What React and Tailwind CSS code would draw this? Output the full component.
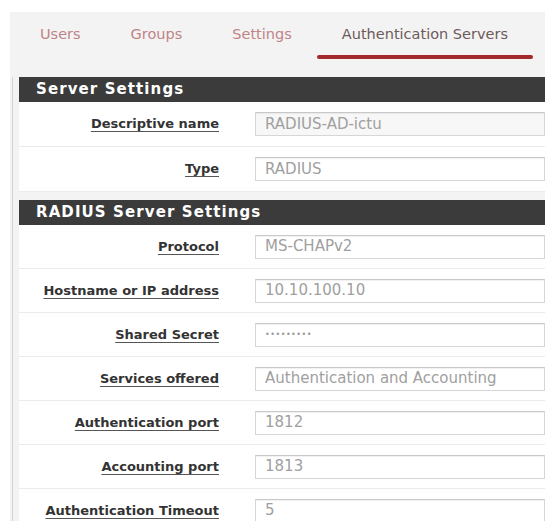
import React from 'react';

const tabs = [
  { label: 'Users' },
  { label: 'Groups' },
  { label: 'Settings' },
  { label: 'Authentication Servers', active: true },
];

const serverRows = [
  { label: 'Descriptive name', value: 'RADIUS-AD-ictu', muted: true },
  { label: 'Type', value: 'RADIUS' },
];

const radiusRows = [
  { label: 'Protocol', value: 'MS-CHAPv2' },
  { label: 'Hostname or IP address', value: '10.10.100.10' },
  { label: 'Shared Secret', value: '•••••••••', secret: true },
  { label: 'Services offered', value: 'Authentication and Accounting' },
  { label: 'Authentication port', value: '1812' },
  { label: 'Accounting port', value: '1813' },
  { label: 'Authentication Timeout', value: '5' },
];

function Field({ row, tall }) {
  return (
    <div
      className={`flex items-center border-b border-[#ebebeb] bg-white ${tall ? 'h-[45px]' : 'h-[44px]'}`}
    >
      <div className="w-[200px] shrink-0 text-right text-[13px] font-bold text-[#333] underline decoration-[#555] underline-offset-[3px]">
        {row.label}
      </div>
      <div
        className={`ml-[36px] flex h-[24px] flex-1 items-center border border-[#d6d6d6] border-t-[#c8c8c8] pl-[9px] shadow-[inset_0_1px_1px_rgba(0,0,0,0.06)] ${
          row.muted ? 'bg-[#f7f7f7]' : 'bg-white'
        }`}
      >
        <span className={row.secret ? 'text-[8px] tracking-[0.5px] text-[#999]' : 'text-[15px] text-[#a0a0a0]'}>
          {row.value}
        </span>
      </div>
    </div>
  );
}

function Section({ title, rows, tall, className = '' }) {
  return (
    <section className={className}>
      <h2 className="flex h-[25px] items-center bg-[#3b3b3b] pl-[17px] text-[15px] font-bold tracking-[1.1px] text-white">
        {title}
      </h2>
      {rows.map((row) => (
        <Field key={row.label} row={row} tall={tall} />
      ))}
    </section>
  );
}

export default function App() {
  return (
    <div className="h-[521px] w-[545px] overflow-hidden bg-white font-['DejaVu_Sans',sans-serif]">
      <div className="ml-[10px] mt-[12px] h-[509px] bg-[#f3f3f3]">
        {/* tab bar */}
        <nav className="flex h-[65px] items-start pl-[5px] pt-[12px]">
          {tabs.map((tab) => (
            <div key={tab.label} className="flex flex-col">
              <span
                className={`px-[25px] text-[14.5px] leading-[20px] ${
                  tab.active ? 'text-[#6e5a5a]' : 'text-[#c08487]'
                }`}
              >
                {tab.label}
              </span>
              {tab.active && <span className="mt-[11px] h-[4px] rounded-full bg-[#a3292b]" />}
            </div>
          ))}
        </nav>

        {/* settings panels */}
        <div className="ml-[2px] h-full border-l border-[#d4d4d4] pl-[6px]">
          <Section title="Server Settings" rows={serverRows} tall />
          <Section title="RADIUS Server Settings" rows={radiusRows} className="mt-[8px]" />
        </div>
      </div>
    </div>
  );
}
